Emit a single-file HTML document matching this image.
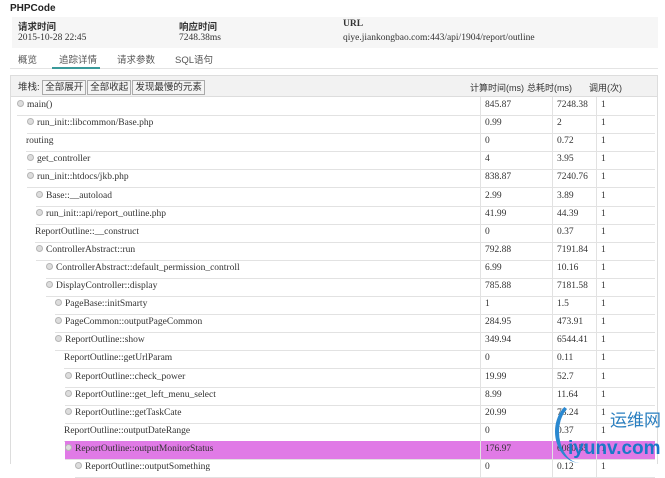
<!DOCTYPE html>
<html><head><meta charset="utf-8"><style>
body{margin:0;width:665px;height:464px;overflow:hidden;background:#fff;font-family:"Liberation Serif","Noto Sans CJK SC",serif;font-size:9.5px;color:#333;position:relative}
.a{position:absolute;white-space:nowrap}
.s{font-family:"Liberation Sans","Noto Sans CJK SC",sans-serif}
.r{position:absolute;height:18px;right:10px;border-bottom:1px solid #e2e2e2;line-height:17px}
.r .t{position:absolute;left:0}
.r .c1,.r .c2,.r .c3{position:absolute;top:0;height:18px;border-left:1px solid #e2e2e2;padding-left:4px}
.r .c1{left:var(--c1)}.r .c2{left:var(--c2)}.r .c3{left:var(--c3)}
.i{display:inline-block;width:5px;height:5px;border-radius:50%;border:1px solid #b5b5b5;background:#ddd;margin-right:3px;vertical-align:0px}
.h{background:#e07ae6}
.btn{display:inline-block;border:1px solid #aaa;background:#f4f4f4;padding:0 2px;height:13px;line-height:13px;margin-right:1px}
</style></head><body>
<div class="a s" style="left:10px;top:3px;font-weight:bold;font-size:10px;color:#222">PHPCode</div>
<div class="a" style="left:12px;top:17px;width:646px;height:31px;background:#f6f6f6"></div>
<div class="a s" style="left:18px;top:19px;font-weight:bold;font-size:9.5px">请求时间</div>
<div class="a" style="left:18px;top:33px">2015-10-28 22:45</div>
<div class="a s" style="left:179px;top:19px;font-weight:bold;font-size:9.5px">响应时间</div>
<div class="a" style="left:179px;top:33px">7248.38ms</div>
<div class="a" style="left:343px;top:19px;font-weight:bold">URL</div>
<div class="a" style="left:343px;top:33px">qiye.jiankongbao.com:443/api/1904/report/outline</div>
<div class="a s" style="left:18px;top:52px;color:#555">概览</div>
<div class="a s" style="left:59px;top:52px;color:#555">追踪详情</div>
<div class="a s" style="left:117px;top:52px;color:#555">请求参数</div>
<div class="a s" style="left:175px;top:52px;color:#555">SQL语句</div>
<div class="a" style="left:10px;top:68px;width:648px;height:1px;background:#e4e4e4"></div>
<div class="a" style="left:52px;top:67px;width:48px;height:2px;background:#3a9a9a"></div>
<div class="a" style="left:10px;top:75px;width:648px;height:389px;border:1px solid #ddd;border-bottom:none;box-sizing:border-box"></div>
<div class="a" style="left:11px;top:76px;width:646px;height:20px;background:#f2f2f2;border-bottom:1px solid #ddd"></div>
<div class="a s" style="left:18px;top:79px;font-size:9.5px">堆栈: <span class="btn">全部展开</span><span class="btn">全部收起</span><span class="btn">发现最慢的元素</span></div>
<div class="a s" style="left:470px;top:81px;font-size:9px">计算时间(ms)</div>
<div class="a s" style="left:527px;top:81px;font-size:9px">总耗时(ms)</div>
<div class="a s" style="left:589px;top:81px;font-size:9px">调用(次)</div>
<div id="rows"></div>
<div class="a s" style="left:610px;top:406px;font-size:17px;color:#2a7fc0">运维网</div>
<div class="a s" style="left:568px;top:438px;font-size:19px;font-weight:bold;color:#1b78c8">iyunv.com</div>
<div class="a" style="left:555px;top:400px;width:46px;height:60px;border-left:4px solid #2a88d0;border-radius:50%;border-top:3px solid transparent"></div>
<script>
var d=[["main()",0,1,"845.87","7248.38"],["run_init::libcommon/Base.php",1,1,"0.99","2"],["routing",1,0,"0","0.72"],["get_controller",1,1,"4","3.95"],["run_init::htdocs/jkb.php",1,1,"838.87","7240.76"],["Base::__autoload",2,1,"2.99","3.89"],["run_init::api/report_outline.php",2,1,"41.99","44.39"],["ReportOutline::__construct",2,0,"0","0.37"],["ControllerAbstract::run",2,1,"792.88","7191.84"],["ControllerAbstract::default_permission_controll",3,1,"6.99","10.16"],["DisplayController::display",3,1,"785.88","7181.58"],["PageBase::initSmarty",4,1,"1","1.5"],["PageCommon::outputPageCommon",4,1,"284.95","473.91"],["ReportOutline::show",4,1,"349.94","6544.41"],["ReportOutline::getUrlParam",5,0,"0","0.11"],["ReportOutline::check_power",5,1,"19.99","52.7"],["ReportOutline::get_left_menu_select",5,1,"8.99","11.64"],["ReportOutline::getTaskCate",5,1,"20.99","73.24"],["ReportOutline::outputDateRange",5,0,"0","0.37"],["ReportOutline::outputMonitorStatus",5,1,"176.97","6080.55"],["ReportOutline::outputSomething",6,1,"0","0.12"]];
var h="";d.forEach(function(r,i){var L=Math.round(17+9.6*r[1])-(r[2]?0:1);var top=97+18.1*i;
h+='<div class="r'+(i==19?' h':'')+'" style="top:'+top+'px;left:'+L+'px;--c1:'+(480-L)+'px;--c2:'+(552-L)+'px;--c3:'+(596-L)+'px"><span class="t">'+(r[2]?'<span class="i"></span>':'')+r[0]+'</span><span class="c1">'+r[3]+'</span><span class="c2">'+r[4]+'</span><span class="c3">1</span></div>';});
document.getElementById("rows").innerHTML=h;
</script>
</body></html>
